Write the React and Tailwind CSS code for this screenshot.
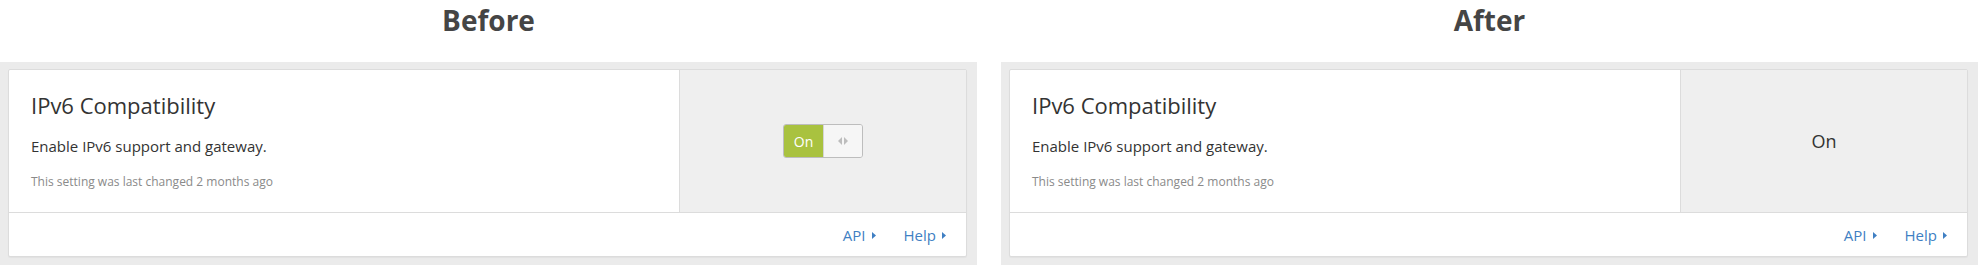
import React from 'react';

const Caret = () => (
    <svg width="4" height="7" viewBox="0 0 4 7" className="ml-[6px] mt-[2px]">
        <path d="M0 0 L4 3.5 L0 7 Z" fill="#3f7fc3" />
    </svg>
);

const Toggle = () => (
    <div className="flex w-[80px] h-[34px] border border-[#bdbdbd] rounded-[3px] overflow-hidden">
        <div className="w-[39px] bg-[#a9c23f] text-white text-[14px] flex items-center justify-center">On</div>
        <div className="flex-1 bg-[#f6f6f6] border-l border-[#d5d5d5] flex items-center justify-center gap-[2px]">
            <svg width="4" height="8" viewBox="0 0 4 8">
                <path d="M4 0 L0 4 L4 8 Z" fill="#bdbdbd" />
            </svg>
            <svg width="4" height="8" viewBox="0 0 4 8">
                <path d="M0 0 L4 4 L0 8 Z" fill="#bdbdbd" />
            </svg>
        </div>
    </div>
);

const SettingCard = ({ label, control }) => (
    <div className="w-[977px] flex flex-col">
        <div className="h-[62px] flex justify-center pt-px">
            <h2 className="text-[28px] font-bold text-[#454545] leading-[38px]">{label}</h2>
        </div>
        <div className="bg-[#ebebeb] pt-[7px] pl-2 pr-[10px] pb-2">
            <div className="bg-white border border-[#dcdcdc] rounded-[2px] shadow-[0_1px_1px_rgba(0,0,0,0.04)]">
                <div className="flex h-[143px] border-b border-[#dcdcdc]">
                    <div className="flex-1 pl-[22px] pt-5">
                        <h3 className="text-[22px] leading-[30px] text-[#333]">IPv6 Compatibility</h3>
                        <p className="mt-[14px] text-[15px] leading-[24px] text-[#333]">Enable IPv6 support and gateway.</p>
                        <p className="mt-[15px] text-[12px] leading-[18px] text-[#8a8a8a]">This setting was last changed 2 months ago</p>
                    </div>
                    <div className="w-[287px] bg-[#efefef] border-l border-[#dcdcdc] flex items-center justify-center">
                        {control}
                    </div>
                </div>
                <div className="h-[43px] flex items-center justify-end gap-7 pr-5 text-[15px] leading-[20px] text-[#3f7fc3]">
                    <a className="flex items-center">API<Caret /></a>
                    <a className="flex items-center">Help<Caret /></a>
                </div>
            </div>
        </div>
    </div>
);

const App = () => {
    return (
        <div className="w-[1978px] h-[266px] overflow-hidden bg-white flex gap-6 font-['Open_Sans',sans-serif]">
            <SettingCard label="Before" control={<Toggle />} />
            <SettingCard label="After" control={<span className="text-[18px] text-[#333]">On</span>} />
        </div>
    );
};

export default App;
